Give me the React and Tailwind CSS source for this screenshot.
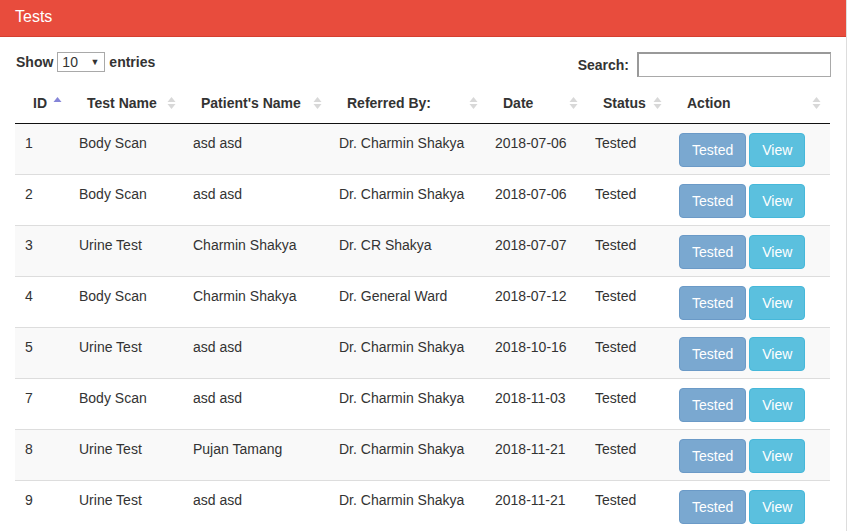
import React from 'react';

const rows = [
  { id: 1, test: 'Body Scan', patient: 'asd asd', ref: 'Dr. Charmin Shakya', date: '2018-07-06' },
  { id: 2, test: 'Body Scan', patient: 'asd asd', ref: 'Dr. Charmin Shakya', date: '2018-07-06' },
  { id: 3, test: 'Urine Test', patient: 'Charmin Shakya', ref: 'Dr. CR Shakya', date: '2018-07-07' },
  { id: 4, test: 'Body Scan', patient: 'Charmin Shakya', ref: 'Dr. General Ward', date: '2018-07-12' },
  { id: 5, test: 'Urine Test', patient: 'asd asd', ref: 'Dr. Charmin Shakya', date: '2018-10-16' },
  { id: 7, test: 'Body Scan', patient: 'asd asd', ref: 'Dr. Charmin Shakya', date: '2018-11-03' },
  { id: 8, test: 'Urine Test', patient: 'Pujan Tamang', ref: 'Dr. Charmin Shakya', date: '2018-11-21' },
  { id: 9, test: 'Urine Test', patient: 'asd asd', ref: 'Dr. Charmin Shakya', date: '2018-11-21' },
];

const columns = [
  { label: 'ID', width: 'w-[56px]', pad: 'pl-[18px]', sort: 'asc' },
  { label: 'Test Name', width: 'w-[114px]', pad: 'pl-[16px]' },
  { label: "Patient's Name", width: 'w-[146px]', pad: 'pl-[16px]' },
  { label: 'Referred By:', width: 'w-[156px]', pad: 'pl-[16px]' },
  { label: 'Date', width: 'w-[100px]', pad: 'pl-[16px]' },
  { label: 'Status', width: 'w-[84px]', pad: 'pl-[16px]' },
  { label: 'Action', width: 'w-[159px]', pad: 'pl-[16px]' },
];

function SortIcon({ sort }) {
  if (sort === 'asc') {
    return (
      <svg width="9" height="14" viewBox="0 0 9 14" className="absolute right-[9px] top-[13px]">
        <path d="M4.5 1 L8.5 6 L0.5 6 Z" fill="#8585d8" />
      </svg>
    );
  }
  return (
    <svg width="9" height="14" viewBox="0 0 9 14" className="absolute right-[9px] top-[13px]">
      <path d="M4.5 1 L8.5 6 L0.5 6 Z" fill="#d8d8d8" />
      <path d="M4.5 13 L8.5 8 L0.5 8 Z" fill="#d8d8d8" />
    </svg>
  );
}

export default function App() {
  return (
    <div className="w-[847px] min-h-[531px] bg-white border-r border-[#ddd] font-['Liberation_Sans',Arial,sans-serif] text-[#333] text-[14px]">
      {/* Panel heading */}
      <div className="h-[37px] bg-[#e84c3d] border-b border-[#d43f30] px-[15px] flex items-center">
        <span className="text-white text-[16px] leading-[22px] -mt-[3px]">Tests</span>
      </div>

      <div className="px-[15px]">
        {/* Controls */}
        <div className="flex justify-between items-start pt-[15px] h-[46px]">
          <label className="flex items-center font-bold leading-[20px] pl-[1px]">
            Show
            <span className="mx-[4px] w-[48px] h-[20px] border border-[#a9a9a9] flex items-center justify-between pl-[4px] pr-[5px] font-normal">
              <span>10</span>
              <span className="text-[9px]">▼</span>
            </span>
            entries
          </label>
          <label className="flex items-center font-bold leading-[20px]">
            Search:
            <span className="ml-[8px] w-[194px] h-[25px] border border-[#a9a9a9] border-t-2 border-t-[#999] border-l-2 border-l-[#999] bg-white"></span>
          </label>
        </div>

        {/* Table */}
        <table className="w-[815px] table-fixed border-collapse">
          <thead>
            <tr>
              {columns.map((c) => (
                <th
                  key={c.label}
                  className={`${c.width} ${c.pad} relative text-left font-bold leading-[20px] pt-[10px] pb-[10px] pr-[18px] border-b border-[#111] whitespace-nowrap`}
                >
                  {c.label}
                  <SortIcon sort={c.sort} />
                </th>
              ))}
            </tr>
          </thead>
          <tbody>
            {rows.map((r, i) => (
              <tr key={r.id} className={`${i % 2 === 0 ? 'bg-[#f9f9f9]' : 'bg-white'} ${i > 0 ? 'border-t border-[#ddd]' : ''}`}>
                <td className="align-top pl-[10px] pr-[8px] pt-[9px] pb-[8px] leading-[20px]">{r.id}</td>
                <td className="align-top pl-[8px] pr-[8px] pt-[9px] pb-[8px] leading-[20px]">{r.test}</td>
                <td className="align-top pl-[8px] pr-[8px] pt-[9px] pb-[8px] leading-[20px] whitespace-nowrap">{r.patient}</td>
                <td className="align-top pl-[8px] pr-[8px] pt-[9px] pb-[8px] leading-[20px] whitespace-nowrap">{r.ref}</td>
                <td className="align-top pl-[8px] pr-[8px] pt-[9px] pb-[8px] leading-[20px]">{r.date}</td>
                <td className="align-top pl-[8px] pr-[8px] pt-[9px] pb-[8px] leading-[20px]">Tested</td>
                <td className="align-top pl-[8px] pr-[8px] pt-[9px] pb-[7px]">
                  <div className="flex gap-[3px]">
                    <button className="h-[34px] px-[12px] rounded-[4px] bg-[#7aa8d0] border border-[#6b9ac7] text-white leading-[20px]">
                      Tested
                    </button>
                    <button className="h-[34px] px-[12px] rounded-[4px] bg-[#5bc0de] border border-[#46b8da] text-white leading-[20px]">
                      View
                    </button>
                  </div>
                </td>
              </tr>
            ))}
          </tbody>
        </table>
      </div>
    </div>
  );
}
